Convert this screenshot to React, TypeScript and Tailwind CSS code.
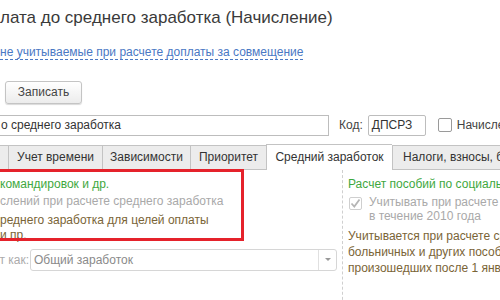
import React from 'react';

const Tab = ({ label, className }: { label: string; className: string }) => (
  <div className={`shrink-0 h-[25px] flex items-center justify-center border-t border-l border-b border-[#c3c3c3] bg-[#ececec] text-[12px] text-[#333] whitespace-nowrap overflow-hidden ${className}`}>
    {label}
  </div>
);

const App: React.FC = () => {
  return (
    <div className="relative w-[500px] h-[300px] overflow-hidden bg-white text-[#333]" style={{ fontFamily: '"Liberation Sans", Arial, sans-serif' }}>
      <div className="pt-[6px] text-[17px] leading-[24px] text-[#3a3a3a] whitespace-nowrap">
        лата до среднего заработка (Начисление)
      </div>

      <div className="mt-[14px] text-[12px] leading-[16px] whitespace-nowrap">
        <span className="text-[#4a78c4] border-b border-dashed border-[#4a78c4]">
          не учитываемые при расчете доплаты за совмещение
        </span>
      </div>

      <div className="mt-[19px] ml-[5px]">
        <button className="w-[77px] h-[23px] rounded-[3px] border border-[#c4c4c4] bg-gradient-to-b from-white to-[#ececec] shadow-[0_1px_1px_rgba(0,0,0,0.15)] text-[12px] text-[#444]">
          Записать
        </button>
      </div>

      <div className="mt-[11px] flex items-center h-[21px] whitespace-nowrap">
        <div className="shrink-0 w-[329px] h-[21px] border border-l-0 border-[#bdbdbd] text-[12px] leading-[19px] pl-[1px]">
          о среднего заработка
        </div>
        <span className="shrink-0 ml-[10px] text-[12px] text-[#444]">Код:</span>
        <div className="shrink-0 ml-[5px] w-[58px] h-[21px] border border-[#bdbdbd] rounded-[2px] text-[12px] leading-[19px] pl-[3px]">
          ДПСРЗ
        </div>
        <div className="shrink-0 ml-[12px] w-[14px] h-[14px] border border-[#9a9a9a] rounded-[2px] bg-white" />
        <span className="shrink-0 ml-[5px] text-[12px] text-[#444]">Начисление по</span>
      </div>

      <div className="mt-[8px] flex items-end">
        <Tab label="" className="w-[8px] border-l-0" />
        <Tab label="Учет времени" className="w-[94px]" />
        <Tab label="Зависимости" className="w-[88px]" />
        <Tab label="Приоритет" className="w-[76px]" />
        <div className="shrink-0 w-[126px] h-[26px] flex items-center justify-center border-t border-l border-[#c3c3c3] bg-white text-[12px] text-[#333] whitespace-nowrap">
          Средний заработок
        </div>
        <Tab label="Налоги, взносы, бухучет" className="w-[140px] justify-start pl-[10px]" />
      </div>

      <div className="flex">
        <div className="w-[343px] shrink-0 border-r border-dashed border-[#cfcfcf] h-[140px]">
          <div className="mt-[6px] text-[12px] leading-[16px] text-[#3ea83e] whitespace-nowrap">командировок и др.</div>
          <div className="mt-[1px] text-[12px] leading-[16px] text-[#a9a9a9] whitespace-nowrap">слений при расчете среднего заработка</div>
          <div className="mt-[4px] text-[12px] leading-[15px] text-[#7a6436] whitespace-nowrap">
            <div>реднего заработка для целей оплаты</div>
            <div>и пр.</div>
          </div>
          <div className="mt-[6px] flex items-center">
            <div className="w-[29px] overflow-hidden flex justify-end shrink-0">
              <span className="text-[12px] text-[#ababab] whitespace-nowrap">т как:</span>
            </div>
            <div className="shrink-0 ml-[1px] w-[307px] h-[22px] border border-[#d6d6d6] rounded-[3px] flex items-center">
              <span className="flex-1 pl-[3px] text-[12px] text-[#8a8a8a]">Общий заработок</span>
              <div className="w-[18px] h-full border-l border-[#e0e0e0] flex items-center justify-center">
                <div className="w-0 h-0 border-l-[3px] border-r-[3px] border-t-[3px] border-l-transparent border-r-transparent border-t-[#999]" />
              </div>
            </div>
          </div>
        </div>
        <div className="pl-[5px] whitespace-nowrap">
          <div className="mt-[6px] text-[12px] leading-[16px] text-[#3ea83e]">Расчет пособий по социальному страхованию</div>
          <div className="mt-[2px] flex items-start">
            <div className="shrink-0 mt-[3px] ml-[1px] w-[13px] h-[13px] border border-[#cfcfcf] rounded-[2px] flex items-center justify-center">
              <svg width="11" height="11" viewBox="0 0 11 11">
                <path d="M1.5 5.5 L4.3 8.5 L9.5 1.5" fill="none" stroke="#b5b5b5" strokeWidth="1.8" />
              </svg>
            </div>
            <div className="ml-[7px] text-[12px] leading-[14px] text-[#a9a9a9] pt-[1px]">
              <div>Учитывать при расчете среднего</div>
              <div>в течение 2010 года</div>
            </div>
          </div>
          <div className="mt-[5px] text-[12px] leading-[16px] text-[#7a6436]">
            <div>Учитывается при расчете среднего заработка</div>
            <div>больничных и других пособий по случаям,</div>
            <div>произошедших после 1 января 2011 года</div>
          </div>
        </div>
      </div>

      <div className="absolute left-[-4px] top-[169px] w-[248px] h-[72px] border-[3px] border-[#e5222b]" />
    </div>
  );
};

export default App;
